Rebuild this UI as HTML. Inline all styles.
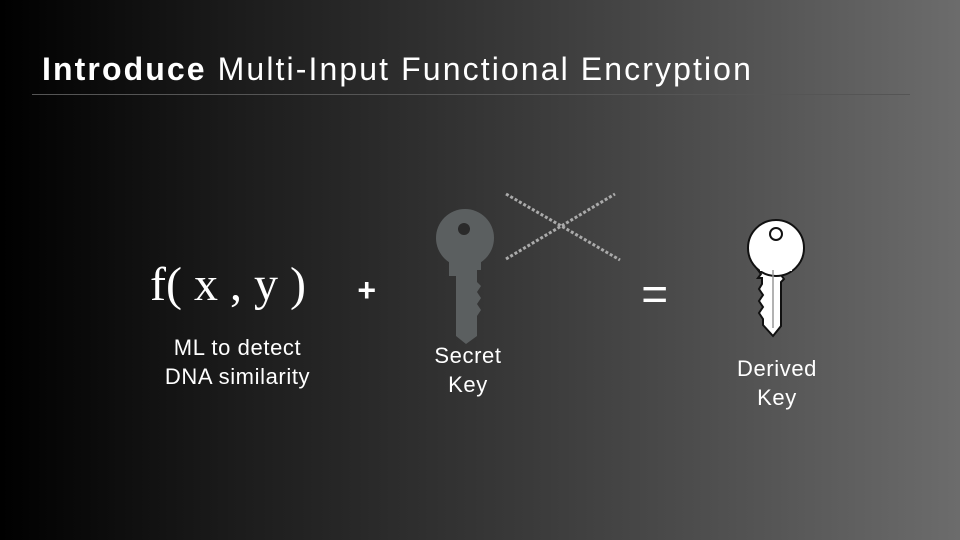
<!DOCTYPE html>
<html><head><style>
body{margin:0;width:960px;height:540px;overflow:hidden;background:linear-gradient(90deg,#000 0%,#1c1c1c 25%,#3a3a3a 55%,#555 80%,#6c6c6c 100%);font-family:"Liberation Sans",sans-serif;color:#fff;position:relative}
.t{position:absolute;left:42px;top:51px;font-size:32px;letter-spacing:2.1px;white-space:nowrap}
.line{position:absolute;left:32px;top:94px;width:878px;height:1px;background:#555}
.a{position:absolute;text-align:center;font-size:22px;letter-spacing:0.6px;line-height:29px;white-space:nowrap}
</style></head><body>
<div class="t"><b>Introduce</b> Multi-Input Functional Encryption</div>
<div class="line"></div>
<div class="a" style="left:150px;top:254px;font-family:'Liberation Serif',serif;font-size:48px;letter-spacing:0;line-height:62px">f( x , y )</div>
<div class="a" style="left:140px;top:333px;width:195px">ML to detect<br>DNA similarity</div>
<div class="a" style="left:352px;top:276px;font-size:32px;font-weight:bold;width:30px">+</div>
<div class="a" style="left:418px;top:341px;width:100px">Secret<br>Key</div>
<div class="a" style="left:638px;top:280px;font-size:46px;width:34px">=</div>
<div class="a" style="left:722px;top:354px;width:110px">Derived<br>Key</div>
<svg width="960" height="540" style="position:absolute;left:0;top:0">
<g fill="#5b5f60">
<circle cx="465" cy="238" r="29"/>
<path d="M449 262h32v8h-4v12l4 4-4 6 4 6-4 6 4 6-4 6v20l-11 8-10-8v-60h-7z"/>
</g>
<circle cx="464" cy="229" r="6" fill="#2a2a2a"/>
<g stroke="#aaa" stroke-width="3" stroke-dasharray="3 2" fill="none">
<path d="M506 194L620 260"/><path d="M506 259L615 194"/>
</g>
<g fill="#fff" stroke="#111" stroke-width="2">
<path d="M766 270h-8l3 4-3 4h4v6l-3 5 4 6-4 6 4 6-4 6 4 6v6l10 11 8-10v-44l3-3-3-4 4-3h4z"/>
<circle cx="776" cy="248" r="28"/>
</g>
<path d="M760 269h32" stroke="#fff" stroke-width="4"/>
<circle cx="776" cy="234" r="6" fill="#fff" stroke="#111" stroke-width="2"/>
<path d="M773 270v58" stroke="#999" stroke-width="1.5"/>
</svg>
</body></html>
